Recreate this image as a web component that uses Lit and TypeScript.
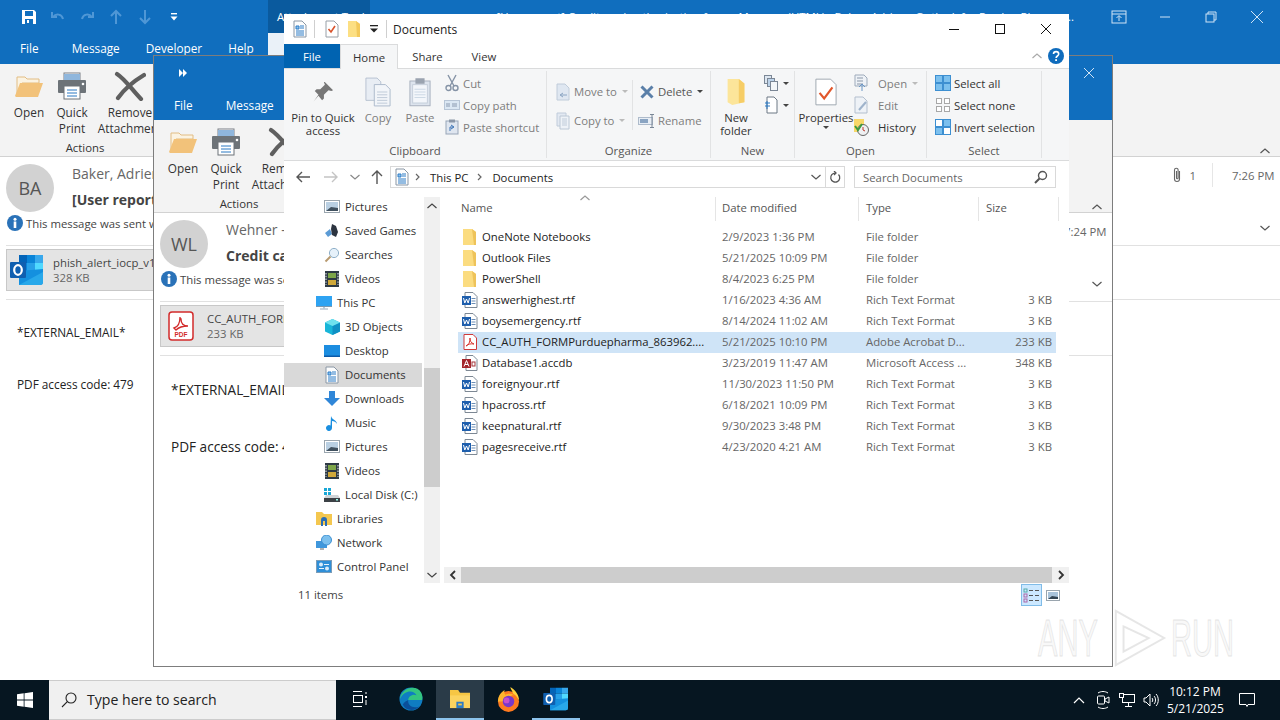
import { LitElement, html, css, TemplateResult } from "lit";
import { customElement } from "lit/decorators.js";

const icons = {
  save: html`<svg class="ic" width="16" height="16" viewBox="0 0 16 16"><path d="M1 1h12l2 2v12H1z" fill="#fff"/><rect x="4" y="2" width="8" height="5" fill="#106ebe"/><rect x="4" y="10" width="8" height="5" fill="#106ebe"/><rect x="6" y="11" width="2" height="3" fill="#fff"/></svg>`,
  undo: html`<svg class="ic" width="16" height="16" viewBox="0 0 16 16" fill="none" stroke="#4f97d6" stroke-width="2"><path d="M2 3v5h5"/><path d="M3 8c3-4 9-3 10 2"/></svg>`,
  redo: html`<svg class="ic" width="16" height="16" viewBox="0 0 16 16" fill="none" stroke="#4f97d6" stroke-width="2"><path d="M14 3v5H9"/><path d="M13 8C10 4 4 5 3 10"/></svg>`,
  upd: html`<svg class="ic" width="14" height="16" viewBox="0 0 14 16" fill="none" stroke="#4f97d6" stroke-width="2"><path d="M7 15V3M2 7l5-5 5 5"/></svg>`,
  dnd: html`<svg class="ic" width="14" height="16" viewBox="0 0 14 16" fill="none" stroke="#4f97d6" stroke-width="2"><path d="M7 1v12M2 9l5 5 5-5"/></svg>`,
  qatmore: html`<svg class="ic" width="10" height="10" viewBox="0 0 10 10" fill="#fff"><rect x="2" y="1" width="6" height="1.4"/><path d="M1.5 4.5h7L5 8.5z"/></svg>`,
  ff: html`<svg class="ic" width="10" height="10" viewBox="0 0 10 10" fill="#fff"><path d="M1 1l4 4-4 4zM5 1l4 4-4 4z"/></svg>`,
  openf: html`<svg class="ic" width="30" height="26" viewBox="0 0 30 26"><path d="M3 24V4h8l2 2h12v4H8z" fill="#fbf3e2" stroke="#e2bd83"/><path d="M1 23l5-13h23l-5 14H2z" fill="#f2c27a"/></svg>`,
  printer: html`<svg class="ic" width="30" height="28" viewBox="0 0 30 28"><rect x="7" y="1" width="16" height="10" fill="#fff" stroke="#7a7f85"/><rect x="7" y="2" width="16" height="6" fill="#8fb6dc"/><path d="M2 8h26a1 1 0 0 1 1 1v11a1 1 0 0 1-1 1H2a1 1 0 0 1-1-1V9a1 1 0 0 1 1-1z" fill="#6d7378"/><rect x="7" y="14" width="16" height="13" fill="#fff" stroke="#6d7378"/><path d="M10 18h10M10 21h10M10 24h10" stroke="#2b78c2"/><circle cx="26" cy="12" r="1.3" fill="#fff"/></svg>`,
  remove: html`<svg class="ic" width="32" height="30" viewBox="0 0 32 30" fill="none" stroke="#5f5f5f" stroke-width="4.200" stroke-linecap="round"><path d="M3 3c8 5 16 17 24 25"/><path d="M30 4C20 10 11 17 4 27"/></svg>`,
  doc: html`<svg class="ic" width="14" height="18" viewBox="0 0 14 18"><path d="M1 1h8l4 4v12H1z" fill="#fdfdfd" stroke="#8a97a5"/><path d="M3 6h3v3H3zM7 6h4M7 8h4M3 11h8M3 13h8M3 15h8" stroke="#2c7cc7" fill="#8cc0ea"/></svg>`,
  prop: html`<svg class="ic" width="14" height="18" viewBox="0 0 14 18"><path d="M1 1h8l4 4v12H1z" fill="#fff" stroke="#98a0a8"/><path d="M3.5 9l2.5 3 4-6" fill="none" stroke="#d9532c" stroke-width="1.6"/></svg>`,
  yfolder: html`<svg class="ic" width="14" height="18" viewBox="0 0 14 18"><path d="M1 1h8l4 3v13H1z" fill="#fcdf83"/><path d="M9 1l4 3v13H10z" fill="#f3c95b"/></svg>`,
  pin: html`<svg class="ic" width="22" height="22" viewBox="0 0 24 24" fill="#777"><path d="M14 1l9 9-2 1-3-1-5 5 0 4-2 2-4-5-5 6 5-7-4-4 2-2 4 0 5-5-1-3z"/></svg>`,
  copy: html`<svg class="ic" width="26" height="30" viewBox="0 0 28 32"><path d="M1 1h12l4 4v20H1z" fill="#e8edf4" stroke="#b4c0cf"/><path d="M10 8h12l5 5v18H10z" fill="#f2f5f9" stroke="#aab8ca"/><path d="M13 16h11M13 19h11M13 22h11M13 25h11M13 28h11" stroke="#bcc8d6"/></svg>`,
  paste: html`<svg class="ic" width="22" height="30" viewBox="0 0 24 32"><rect x="1" y="4" width="22" height="27" fill="#dde4ee" stroke="#a5aebc"/><rect x="4" y="8" width="16" height="20" fill="#f3f6fb" stroke="#c3ccd8"/><rect x="7" y="1" width="10" height="6" fill="#9aa3b0"/><path d="M6 13h12M6 16h12M6 19h12M6 22h12" stroke="#c9d5e2"/></svg>`,
  cut: html`<svg class="ic" width="14" height="18" viewBox="0 0 14 18" fill="none" stroke="#8593a6" stroke-width="1.4"><path d="M3 1l6 11M11 1L5 12"/><circle cx="3.5" cy="14" r="2.5"/><circle cx="10.5" cy="14" r="2.5"/></svg>`,
  cpath: html`<svg class="ic" width="16" height="12" viewBox="0 0 16 12"><rect x=".5" y="1.5" width="15" height="9" fill="#dbe7f3" stroke="#b7c5d6"/><path d="M3 4v4M5 4v4M8 5h5M8 7h5" stroke="#8b9ab0"/></svg>`,
  pshort: html`<svg class="ic" width="14" height="16" viewBox="0 0 14 16"><rect x="1" y="2" width="12" height="13" fill="#dfe6f0" stroke="#98a5b8"/><rect x="4" y="0.5" width="6" height="3" fill="#8b97a8"/><path d="M5 12V8h3M6 6l3 2-3 2" stroke="#3a73b5" fill="none"/></svg>`,
  moveto: html`<svg class="ic" width="14" height="18" viewBox="0 0 14 18"><path d="M1 1h8l4 4v12H1z" fill="#dfe7f1" stroke="#c0ccda"/><path d="M11 12H5M7 10l-3 2 3 2" stroke="#8aa4c2" fill="none"/></svg>`,
  copyto: html`<svg class="ic" width="14" height="18" viewBox="0 0 14 18"><path d="M1 1h9v13H1z" fill="#e3e9f2" stroke="#c0ccda"/><path d="M4 4h9v13H4z" fill="#eef2f7" stroke="#bcc8d6"/><path d="M6 7h5M6 9h5M6 11h5M6 13h5" stroke="#c0ccda"/></svg>`,
  del: html`<svg class="ic" width="14" height="14" viewBox="0 0 14 14" fill="none" stroke="#5a7fa8" stroke-width="3"><path d="M1.5 1.5l11 11M12.5 1.5l-11 11"/></svg>`,
  rename: html`<svg class="ic" width="18" height="14" viewBox="0 0 18 14"><rect x="0.5" y="3.5" width="14" height="7" fill="#e8eef5" stroke="#aebbcb"/><rect x="2" y="5" width="8" height="4" fill="#8aa4c2"/><path d="M12 .5h4M14 .5v13M12 13.5h4" stroke="#7a8797" fill="none"/></svg>`,
  nfolder: html`<svg class="ic" width="20" height="28" viewBox="0 0 20 30"><path d="M1 1h12l6 5v20l-13 3-5-3z" fill="#fce59a"/><path d="M13 1l6 5v20l-6 1z" fill="#f6cd66"/></svg>`,
  nitem: html`<svg class="ic" width="14" height="16" viewBox="0 0 14 16"><rect x=".5" y=".5" width="7" height="8" fill="#dde6f0" stroke="#7b8796"/><rect x="3.5" y="3.5" width="7" height="8" fill="#bcd3ea" stroke="#7b8796"/><rect x="6.5" y="6.5" width="7" height="9" fill="#f3f6f9" stroke="#7b8796"/></svg>`,
  eaccess: html`<svg class="ic" width="14" height="18" viewBox="0 0 14 18"><path d="M3 1h7l3 3v13H3z" fill="#fff" stroke="#6c7885"/><path d="M1 7h5M3 5v8M1 10h5" stroke="#2b78c2" fill="none"/></svg>`,
  props: html`<svg class="ic" width="22" height="30" viewBox="0 0 24 30"><path d="M1 1h16l6 6v22H1z" fill="#fff" stroke="#9aa3ad"/><path d="M5 16l5 6 9-12" fill="none" stroke="#e2572b" stroke-width="2.4"/></svg>`,
  open2: html`<svg class="ic" width="14" height="18" viewBox="0 0 14 18"><path d="M1 1h9l3 3v8H1z" fill="#eef2f7" stroke="#9eabbb"/><path d="M3 4h6M3 7h6M3 10h6" stroke="#8a97a8"/><path d="M8 17v-6M5 13l3-3 3 3" stroke="#6a96c5" fill="none"/></svg>`,
  edit: html`<svg class="ic" width="14" height="18" viewBox="0 0 14 18"><path d="M1 1h8l4 4v12H1z" fill="#eef2f7" stroke="#b3bfce"/><path d="M5 14l7-8" stroke="#9fb3cb" stroke-width="2"/></svg>`,
  history: html`<svg class="ic" width="16" height="18" viewBox="0 0 16 18"><rect x="1" y="1" width="10" height="13" fill="#f7d768"/><circle cx="10" cy="12" r="5.5" fill="#eef0f2" stroke="#666"/><path d="M10 9v3l2 1" stroke="#c0392b" fill="none"/><path d="M2 8l3 4 4-6" stroke="#3d9a3d" stroke-width="2" fill="none"/></svg>`,
  selall: html`<svg class="ic" width="16" height="16" viewBox="0 0 16 16" fill="#7cc0ee" stroke="#3d8fd1"><rect x=".5" y=".5" width="7" height="7"/><rect x="8.5" y=".5" width="7" height="7"/><rect x=".5" y="8.5" width="7" height="7"/><rect x="8.5" y="8.5" width="7" height="7"/></svg>`,
  selnone: html`<svg class="ic" width="16" height="16" viewBox="0 0 16 16" fill="#fff" stroke="#a8a8a8"><rect x="1.5" y="1.5" width="5" height="5"/><rect x="9.5" y="1.5" width="5" height="5"/><rect x="1.5" y="9.5" width="5" height="5"/><rect x="9.5" y="9.5" width="5" height="5"/></svg>`,
  selinv: html`<svg class="ic" width="16" height="16" viewBox="0 0 16 16" stroke="#3d8fd1"><rect x=".5" y=".5" width="7" height="7" fill="#fff"/><rect x="8.5" y=".5" width="7" height="7" fill="#7cc0ee"/><rect x=".5" y="8.5" width="7" height="7" fill="#7cc0ee"/><rect x="8.5" y="8.5" width="7" height="7" fill="#fff"/></svg>`,
  help: html`<svg class="ic" width="16" height="16" viewBox="0 0 16 16"><circle cx="8" cy="8" r="8" fill="#0f6cbd"/><path d="M5.5 6c0-3.2 5.2-3.2 5.2 0 0 2-2.6 2-2.6 4" fill="none" stroke="#fff" stroke-width="1.6"/><rect x="7.2" y="11.2" width="1.8" height="1.8" fill="#fff"/></svg>`,
  magnif: html`<svg class="ic" width="14" height="14" viewBox="0 0 14 14" fill="none" stroke="#555" stroke-width="1.4"><circle cx="8.5" cy="5.5" r="4"/><path d="M5.5 8.5L1 13" stroke-width="2"/></svg>`,
  refresh: html`<svg class="ic" width="12" height="13" viewBox="0 0 12 13" fill="none" stroke="#555" stroke-width="1.3"><path d="M9.5 3.5a4.5 4.5 0 1 1-3-1.4"/><path d="M5 0l2 2-2 2" /></svg>`,
  back: html`<svg class="ic" width="14" height="12" viewBox="0 0 14 12" fill="none" stroke="#555" stroke-width="1.4"><path d="M14 6H1M6 1L1 6l5 5"/></svg>`,
  fwd: html`<svg class="ic" width="14" height="12" viewBox="0 0 14 12" fill="none" stroke="#c4c4c4" stroke-width="1.4"><path d="M0 6h13M8 1l5 5-5 5"/></svg>`,
  up: html`<svg class="ic" width="12" height="14" viewBox="0 0 12 14" fill="none" stroke="#555" stroke-width="1.4"><path d="M6 14V1M1 6l5-5 5 5"/></svg>`,
  pics: html`<svg class="ic" width="16" height="13" viewBox="0 0 16 13"><rect x=".5" y=".5" width="15" height="12" fill="#fff" stroke="#9aa5ae"/><rect x="2" y="2" width="12" height="9" fill="#b9cfe2"/><path d="M2 11l5-4 7 1v3z" fill="#40505e"/></svg>`,
  games: html`<svg class="ic" width="16" height="16" viewBox="0 0 16 16"><path d="M1 10l5-4 2 5-4 3z" fill="#5b9bd5"/><path d="M8 1l4 2 2 6-2 5-4-2-1-6z" fill="#2c3440"/></svg>`,
  searches: html`<svg class="ic" width="16" height="16" viewBox="0 0 16 16"><circle cx="10" cy="6" r="4.6" fill="#e6f1fa" stroke="#8fb0c9"/><path d="M6.5 9.5L1.5 14.5" stroke="#b89a70" stroke-width="2"/></svg>`,
  videos: html`<svg class="ic" width="14" height="16" viewBox="0 0 14 16"><rect width="14" height="16" fill="#2e3a44"/><rect x="3" y="2" width="8" height="5" fill="#7ea64a"/><rect x="3" y="9" width="8" height="5" fill="#cfa83a"/><path d="M1 2v12M13 2v12" stroke="#cfd6dc" stroke-dasharray="1.4 1.4" stroke-width="1.2"/></svg>`,
  pc: html`<svg class="ic" width="16" height="14" viewBox="0 0 16 14"><rect width="16" height="10" fill="#2ea3f2"/><rect y="10" width="16" height="1" fill="#7d98ae"/><path d="M4 13h8" stroke="#9ab"/><path d="M7 11h2v2H7z" fill="#b9cbd9"/></svg>`,
  obj3d: html`<svg class="ic" width="15" height="16" viewBox="0 0 15 16"><path d="M7.5 0L15 3.5v9L7.5 16 0 12.500v-9z" fill="#18b5d8"/><path d="M7.500 7L15 3.500v9L7.500 16z" fill="#0f90c4"/><path d="M7.500 0L15 3.500 7.500 7 0 3.500z" fill="#6ee2ee"/></svg>`,
  desktop: html`<svg class="ic" width="16" height="12" viewBox="0 0 16 12"><rect width="16" height="12" fill="#1c8de0"/><rect y="10.500" width="16" height="1.500" fill="#0c5aa8"/></svg>`,
  dl: html`<svg class="ic" width="16" height="16" viewBox="0 0 16 16" fill="#2f86d8"><path d="M5 0h6v7h5l-8 8-8-8h5z"/></svg>`,
  music: html`<svg class="ic" width="12" height="16" viewBox="0 0 12 16"><path d="M5 1c1 4 6 4 6 8-1-2-3-3-5-3v7a3 3 0 1 1-1.500-2.600z" fill="#1a8fe0"/></svg>`,
  disk: html`<svg class="ic" width="16" height="14" viewBox="0 0 16 14"><path d="M2 7h12l2 3v4H0v-4z" fill="#cfd4d8"/><rect y="10" width="16" height="4" fill="#3c4146"/><rect x="12" y="11" width="2" height="1.500" fill="#9fe"/><rect x="0" y="0" width="3" height="3" fill="#19a7d6"/><rect x="4" y="0" width="3" height="3" fill="#19a7d6"/><rect x="0" y="4" width="3" height="3" fill="#19a7d6"/><rect x="4" y="4" width="3" height="3" fill="#19a7d6"/></svg>`,
  libs: html`<svg class="ic" width="16" height="15" viewBox="0 0 16 15"><path d="M0 1h6l2 2h8v11H0z" fill="#f4c74f"/><path d="M5 15V9a3 3 0 0 1 6 0v6H9v-5H7v5z" fill="#2a6db5"/></svg>`,
  network: html`<svg class="ic" width="16" height="15" viewBox="0 0 16 15"><rect y="6" width="11" height="7" fill="#3f97dc"/><circle cx="10.500" cy="5" r="5" fill="#7cc0ee" stroke="#3d8fd1"/><path d="M4 14h4" stroke="#666"/></svg>`,
  cpanel: html`<svg class="ic" width="16" height="13" viewBox="0 0 16 13"><rect x=".5" y=".5" width="15" height="12" fill="#2f8fd8" stroke="#7a9cb8"/><circle cx="5" cy="4.500" r="2" fill="#d9ecfa"/><circle cx="11" cy="8.500" r="2" fill="#d9ecfa"/><path d="M8 4.500h5M3 8.500h5" stroke="#e9f4fc"/></svg>`,
  rowfolder: html`<svg class="ic" width="14" height="16" viewBox="0 0 14 16"><path d="M0 0h9l4 3v13H0z" fill="#fbdc80"/><path d="M9 0l4 3v13h-2z" fill="#eec35a"/></svg>`,
  word: html`<svg class="ic" width="16" height="16" viewBox="0 0 16 16"><path d="M3 .5h8l4 4v11H3z" fill="#fff" stroke="#7d8894"/><path d="M9.500 6.500h4M9.500 9h4M9.500 11.500h4" stroke="#6b8db5"/><rect y="4" width="9" height="9" fill="#1f5fad"/><path d="M1.500 6l1.300 5 1.700-4 1.700 4 1.300-5" stroke="#fff" fill="none"/></svg>`,
  pdfrow: html`<svg class="ic" width="14" height="16" viewBox="0 0 14 16"><path d="M1 .500h9l3.500 3.500v11.500H1z" fill="#fff" stroke="#cf3b3b"/><path d="M3 12c3-1 4-4 4-8 0 3 1 5 4 6-3-.5-6 0-8 2z" fill="none" stroke="#d8342e"/></svg>`,
  access: html`<svg class="ic" width="16" height="16" viewBox="0 0 16 16"><path d="M4 .500h7l4 4v11H4z" fill="#fff" stroke="#7d8894"/><rect x="10" y="7" width="3" height="4" fill="none" stroke="#a4373a"/><rect y="4" width="9" height="9" fill="#a4262c"/><path d="M2 11.500L4.500 5.500 7 11.500M3 9.500h3" stroke="#fff" fill="none"/></svg>`,
  info: html`<svg class="ic" width="16" height="16" viewBox="0 0 16 16"><circle cx="8" cy="8" r="8" fill="#2a72b8"/><circle cx="8" cy="4.200" r="1.500" fill="#fff"/><rect x="6.700" y="6.500" width="2.600" height="6.500" fill="#fff"/></svg>`,
  outlook: html`<svg class="ic" width="34" height="32" viewBox="0 0 34 32"><rect x="9" y="1" width="8" height="8" fill="#0364b8"/><rect x="17" y="1" width="8" height="8" fill="#0a84d8"/><rect x="25" y="1" width="8" height="8" fill="#38a8ec"/><rect x="9" y="9" width="8" height="8" fill="#0a84d8"/><rect x="17" y="9" width="8" height="8" fill="#28a0e8"/><rect x="25" y="9" width="8" height="8" fill="#50d9ff"/><path d="M9 17l24-2v13a3 3 0 0 1-3 3H9z" fill="#1490df"/><path d="M9 31l24-13v10a3 3 0 0 1-3 3z" fill="#28a8ea"/><rect y="8" width="16" height="16" rx="1" fill="#0f5fb0"/><ellipse cx="8" cy="16" rx="3.800" ry="4.800" fill="none" stroke="#fff" stroke-width="2.200"/></svg>`,
  pdfbig: html`<svg class="ic" width="26" height="30" viewBox="0 0 26 30"><rect x="1" y="1" width="24" height="28" rx="3" fill="#fff" stroke="#d22b2b" stroke-width="1.500"/><path d="M6 17c4-1 6-5 6-11 0 2 1 2 1 2 0 4 2 7 7 7-4 0-9 1-12 4z" fill="none" stroke="#d22b2b" stroke-width="1.300"/><text x="13" y="26" text-anchor="middle" font-size="6.500" font-weight="700" fill="#d22b2b" font-family="Liberation Sans">PDF</text></svg>`,
  clip: html`<svg class="ic" width="10" height="16" viewBox="0 0 10 16" fill="none" stroke="#666" stroke-width="1.100"><path d="M7.500 4v8a2.500 2.500 0 0 1-5 0V3a1.800 1.800 0 0 1 3.600 0v8a.8.8 0 0 1-1.600 0V4"/></svg>`,
  winlogo: html`<svg class="ic" width="16" height="16" viewBox="0 0 16 16" fill="#fff"><path d="M0 2.300l6.700-1v6.300H0zM7.500 1.200L16 0v7.600H7.500zM0 8.400h6.700v6.300L0 13.700zM7.500 8.400H16V16l-8.500-1.200z"/></svg>`,
  tbsearch: html`<svg class="ic" width="16" height="16" viewBox="0 0 16 16" fill="none" stroke="#222" stroke-width="1.100"><circle cx="10" cy="6" r="5"/><path d="M6.300 9.700L1 15"/></svg>`,
  taskview: html`<svg class="ic" width="16" height="16" viewBox="0 0 16 16" fill="none" stroke="#fff"><path d="M1 .500h9M1 15.500h9"/><rect x="1.500" y="4.500" width="9" height="7"/><rect x="13" y="5" width="2" height="2" fill="#fff" stroke="none"/><path d="M14 1v2M14 9v5"/></svg>`,
  edge: html`<svg class="ic" width="24" height="24" viewBox="0 0 26 26"><circle cx="13" cy="13" r="12.500" fill="#0f7dc2"/><path d="M1 13C2 4 12-2 20 2c5 3 6 8 5 12H10c0-4 5-7 9-5-3-6-13-6-18 4z" fill="#33c481"/><path d="M10 14c-1 6 5 10 12 7-4 5-14 6-18-2 2-3 4-4 6-5z" fill="#0a4f9a"/></svg>`,
  exptb: html`<svg class="ic" width="22" height="20" viewBox="0 0 24 22"><path d="M1 1h9l2 3h11v17H1z" fill="#f6c644"/><rect x="1" y="7" width="22" height="14" fill="#fbd35f"/><path d="M8 14h8v7H8z" fill="#2c7cc7"/><rect x="10" y="16" width="4" height="2" fill="#f6c644"/></svg>`,
  firefox: html`<svg class="ic" width="23" height="25" viewBox="0 0 24 26"><circle cx="12" cy="15" r="11" fill="#ff7a1f"/><path d="M1 15C1 8 5 5 8 3c-1 3 0 4 1 5 2-1 7-2 9 1-2-1-3 0-3 0l-6 6z" fill="#ffb52e"/><path d="M14 0c5 3 9 8 9 14-2-4-4-6-6-7-1-3-3-5-3-7z" fill="#ffd23d"/><circle cx="12" cy="15" r="6" fill="#7a38c9"/><circle cx="10" cy="14" r="3" fill="#c84fcb"/></svg>`,
  tbchev: html`<svg class="ic" width="12" height="8" viewBox="0 0 12 8" fill="none" stroke="#fff" stroke-width="1.200"><path d="M1 7l5-5 5 5"/></svg>`,
  cam: html`<svg class="ic" width="14" height="20" viewBox="0 0 14 20" fill="none" stroke="#fff"><rect x="1.500" y="6" width="7" height="8" rx="1"/><path d="M9 9l4-2v6l-4-2zM2 3c3-2 7-2 10 0M2 17c3 2 7 2 10 0"/></svg>`,
  net: html`<svg class="ic" width="16" height="14" viewBox="0 0 16 14" fill="none" stroke="#fff"><rect x="3.500" y="1.500" width="12" height="8"/><path d="M9.500 10v3M6 13.500h7"/><rect x=".5" y=".5" width="4" height="4" fill="#0b1826"/></svg>`,
  vol: html`<svg class="ic" width="16" height="14" viewBox="0 0 16 14" fill="none" stroke="#fff"><path d="M1 5h2l4-4v12l-4-4H1zM9 5c1 1 1 3 0 4M11 3c2 2 2 6 0 8M13 1c3 3 3 9 0 12"/></svg>`,
  notif: html`<svg class="ic" width="16" height="16" viewBox="0 0 16 16" fill="none" stroke="#fff"><path d="M.5 1.500h15v11H9l-1 2-1-2H.5z"/></svg>`,
  details: html`<svg class="ic" width="17" height="15" viewBox="0 0 17 15" fill="none" stroke="#555"><rect x="1" y="1" width="3" height="3" stroke="#5aa"/><rect x="1" y="6" width="3" height="3" stroke="#a6a"/><rect x="1" y="11" width="3" height="3" stroke="#a6a"/><path d="M6 2.500h4M12 2.500h4M6 7.500h4M12 7.500h4M6 12.500h4M12 12.500h4"/></svg>`,
  large: html`<svg class="ic" width="14" height="11" viewBox="0 0 14 11"><rect x=".5" y=".5" width="13" height="10" fill="#fff" stroke="#9aa5ae"/><rect x="2" y="2" width="10" height="7" fill="#a9c3da"/><path d="M2 9l4-3 6 1v2z" fill="#344553"/></svg>`,
};

type IconName = keyof typeof icons;

const chev = (d: "up" | "down" | "left" | "right" | "small", color = "#555") => {
  const paths: Record<string, string> = {
    up: "M0.500 7l4.500-4 4.500 4",
    down: "M0.500 3l4.500 4 4.500-4",
    left: "M7 1L3 5l4 4",
    right: "M3 1l4 4-4 4",
    small: "M3 2l3 3-3 3",
  };
  const w = d === "left" || d === "right" ? 1.8 : 1.2;
  return html`<svg class="ic" width="10" height="10" viewBox="0 0 10 10" fill="none" stroke=${color} stroke-width=${w}><path d=${paths[d]}/></svg>`;
};

const navRows: [string, IconName, boolean, boolean?][] = [
  ["Pictures", "pics", true],
  ["Saved Games", "games", true],
  ["Searches", "searches", true],
  ["Videos", "videos", true],
  ["This PC", "pc", false],
  ["3D Objects", "obj3d", true],
  ["Desktop", "desktop", true],
  ["Documents", "doc", true, true],
  ["Downloads", "dl", true],
  ["Music", "music", true],
  ["Pictures", "pics", true],
  ["Videos", "videos", true],
  ["Local Disk (C:)", "disk", true],
  ["Libraries", "libs", false],
  ["Network", "network", false],
  ["Control Panel", "cpanel", false],
];

const files: [string, IconName, string, string, string, boolean?][] = [
  ["OneNote Notebooks", "rowfolder", "2/9/2023 1:36 PM", "File folder", ""],
  ["Outlook Files", "rowfolder", "5/21/2025 10:09 PM", "File folder", ""],
  ["PowerShell", "rowfolder", "8/4/2023 6:25 PM", "File folder", ""],
  ["answerhighest.rtf", "word", "1/16/2023 4:36 AM", "Rich Text Format", "3 KB"],
  ["boysemergency.rtf", "word", "8/14/2024 11:02 AM", "Rich Text Format", "3 KB"],
  ["CC_AUTH_FORMPurduepharma_863962....", "pdfrow", "5/21/2025 10:10 PM", "Adobe Acrobat D...", "233 KB", true],
  ["Database1.accdb", "access", "3/23/2019 11:47 AM", "Microsoft Access ...", "348 KB"],
  ["foreignyour.rtf", "word", "11/30/2023 11:50 PM", "Rich Text Format", "3 KB"],
  ["hpacross.rtf", "word", "6/18/2021 10:09 PM", "Rich Text Format", "3 KB"],
  ["keepnatural.rtf", "word", "9/30/2023 3:48 PM", "Rich Text Format", "3 KB"],
  ["pagesreceive.rtf", "word", "4/23/2020 4:21 AM", "Rich Text Format", "3 KB"],
];

@customElement("app-root")
export class AppRoot extends LitElement {
  static styles = css`
    :host {
      display: flex;
      flex-direction: column;
      width: 1280px;
      height: 720px;
      overflow: hidden;
      background: #fff;
      font-family: "Open Sans", "Noto Sans", sans-serif;
      font-size: 11.35px;
      color: #333;
    }
    .ic { display: block; flex: none; }
    .desk { position: relative; height: 680px; overflow: hidden; background: #fff; }

    /* Outlook windows */
    .mail { position: absolute; display: flex; flex-direction: column; background: #fff; overflow: hidden; }
    .mail.back { left: 0; top: 0; width: 1280px; height: 680px; }
    .mail.front { left: 153px; top: 55px; width: 958px; height: 610px; border: 1px solid #7d7d7d; }
    .head { background: #106ebe; height: 64px; color: #fff; flex: none; }
    .titlebar { display: flex; align-items: flex-start; height: 33px; }
    .qat { display: flex; align-items: center; height: 33px; padding-left: 14.5px; }
    .qat span { width: 29px; display: flex; justify-content: center; }
    .qatspace { width: 268px; flex: none; display: flex; }
    .ctxtab { width: 102px; height: 33px; background: #0a5a9e; line-height: 33px; padding-left: 9px; box-sizing: border-box; white-space: nowrap; overflow: hidden; flex: none; }
    .wintitle { flex: 1; text-align: right; line-height: 33px; white-space: nowrap; overflow: hidden; padding-right: 22px; }
    .wctl { display: flex; align-items: center; height: 33px; flex: none; }
    .wctl span { width: 46px; display: flex; justify-content: center; }
    .wctl svg { stroke: #cfe3f5; fill: none; }
    .mtabs { display: flex; gap: 26px; padding: 6px 0 0 20px; font-size: 11.8px; line-height: 18px; position: relative; }
    .mtabs .first { margin-right: 7px; }
    .activetab { position: absolute; left: 268px; top: 0; width: 60px; height: 22px; background: #eaf1f8; }
    .front .mtabs { padding-top: 7px; }
    .rib { height: 92px; background: #f3f3f3; flex: none; display: flex; border-bottom: 1px solid #d2d2d2; }
    .rgroup { display: flex; flex-direction: column; width: 162px; margin-left: 6px; padding-top: 4px; box-sizing: border-box; height: 92px; }
    .rbtns { display: flex; height: 72px; text-align: center; line-height: 16px; color: #333; font-size: 11.8px; }
    .rbtn { display: flex; flex-direction: column; align-items: center; white-space: nowrap; }
    .rbtn.a { width: 46px; }
    .rbtn.b { width: 40px; }
    .rbtn.c { width: 76px; }
    .rico { height: 36px; display: flex; align-items: center; justify-content: center; }
    .rlab { text-align: center; line-height: 16px; padding-right: 4px; }
    .collapse { margin-left: auto; align-self: flex-end; padding: 0 10px 0 0; }
    .meta { display: flex; height: 56px; padding: 7px 0 0 6px; box-sizing: border-box; flex: none; }
    .avatar { width: 48px; height: 48px; border-radius: 50%; background: #d2d2d2; color: #555; font-size: 18px; display: flex; align-items: center; justify-content: center; flex: none; }
    .who { margin-left: 18px; flex: 1; white-space: nowrap; }
    .from { font-size: 14px; line-height: 20px; color: #666; }
    .subj { font-size: 14px; line-height: 22px; margin-top: 5px; font-weight: 700; color: #444; }
    .side { display: flex; align-items: center; height: 22px; color: #666; }
    .side .c1 { margin: 0 16px 0 8px; }
    .side .vsep { width: 1px; height: 24px; background: #e6e6e6; margin-right: 19px; }
    .side .time { padding-right: 8px; width: 40px; white-space: nowrap; }
    .info { display: flex; align-items: center; gap: 3px; height: 20px; padding-left: 7px; white-space: nowrap; flex: none; color: #444; }
    .expand { margin: 10px 0 0 auto; padding-right: 10px; }
    .hr { height: 1px; background: #e1e1e1; flex: none; margin: 0 0 0 6px; }
    .hr.h1 { margin-top: 12px; }
    .attach { margin: 3px 0 8px 6px; width: 320px; height: 42px; background: #e4e4e4; border: 1px solid #c8c8c8; box-sizing: border-box; display: flex; align-items: center; flex: none; white-space: nowrap; }
    .aicon { width: 40px; margin-right: 6px; display: flex; justify-content: center; }
    .att-name { line-height: 15px; color: #444; }
    .att-size { line-height: 15px; color: #666; }
    .body { padding: 23px 0 0 17px; line-height: 18px; color: #222; white-space: nowrap; font-size: 11.8px; }
    .body p { margin: 0 0 34px; }
    .front .body { font-size: 13.6px; line-height: 20px; padding-top: 24px; }
    .front .body p { margin-bottom: 37px; }

    /* Explorer */
    .exp { position: absolute; left: 284px; top: 14px; width: 785px; height: 592px; background: #fff; display: flex; flex-direction: column; overflow: hidden; }
    .xtitle { display: flex; align-items: center; height: 30px; flex: none; font-size: 12px; color: #222; }
    .xq { display: flex; align-items: center; padding-left: 9px; }
    .xq .sep { width: 1px; height: 18px; background: #cfcfcf; margin: 0 10px 0 7px; }
    .xq .g { margin-right: 8px; }
    .xq .sep2 { width: 1px; height: 18px; background: #cfcfcf; margin: 0 6px 0 7px; }
    .xctl { margin-left: auto; display: flex; align-items: center; }
    .xctl span { width: 46px; display: flex; justify-content: center; }
    .xtabs { display: flex; height: 25px; flex: none; border-bottom: 1px solid #dadbdc; box-sizing: border-box; align-items: stretch; }
    .xt { display: flex; align-items: center; justify-content: center; }
    .xt.file { width: 56px; background: #0063b1; color: #fff; }
    .xt.home { width: 58px; background: #f5f6f7; border: 1px solid #dadbdc; border-bottom: 0; box-sizing: border-box; height: 25px; }
    .xt.share { width: 59px; }
    .xt.view { width: 54px; }
    .xtr { margin-left: auto; display: flex; align-items: center; padding-right: 5px; gap: 6px; }
    .xrib { display: flex; height: 92px; background: #f5f6f7; border-bottom: 1px solid #dadbdc; box-sizing: border-box; flex: none; color: #333; }
    .grp { display: flex; flex-direction: column; border-right: 1px solid #e2e3e4; margin: 2px 0; box-sizing: border-box; height: 87px; }
    .grp.cb { width: 263px; }
    .grp.org { width: 164px; }
    .grp.nw { width: 84px; }
    .grp.op { width: 132px; }
    .grp.sl { width: 115px; }
    .gbody { height: 72px; display: flex; flex: none; padding-top: 3px; box-sizing: border-box; }
    .gbody > .col { margin-top: -2px; }
    .glab { flex: 1; text-align: center; line-height: 16px; color: #555; }
    .big { display: flex; flex-direction: column; align-items: center; text-align: center; line-height: 13px; white-space: nowrap; flex: none; }
    .big .bi { height: 36px; display: flex; align-items: center; justify-content: center; margin-bottom: 1px; }
    .dim { color: #7d7d7d; }
    .col { display: flex; flex-direction: column; flex: none; }
    .sm { display: flex; align-items: center; height: 22px; white-space: nowrap; }
    .sm .si { display: flex; justify-content: center; flex: none; width: 16px; margin-right: 3px; }
    .sm.soft { color: #555; }
    .org .col { padding-top: 5px; }
    .org .sm { height: 29px; }
    .org .col-m { margin-left: 8px; width: 77px; }
    .orgsep { width: 1px; height: 50px; margin: 6px 6px 0 0; background: #e2e3e4; }
    .caret { display: inline-block; width: 0; height: 0; border: 3px solid transparent; border-top: 3.500px solid #444; border-bottom: 0; margin-left: 5px; }
    .caret.d { border-top-color: #bbb; }
    .w-pin { width: 62px; margin-left: 8px; }
    .w-copy { width: 40px; margin-left: 4px; }
    .w-paste { width: 40px; margin-left: 2px; }
    .col-cb { margin-left: 4px; }
    .nfold { width: 50px; }
    .nsmall { margin-left: 3px; padding-top: 2px; gap: 4px; }
    .nsmall .sm { height: 18px; }
    .prop-b { width: 62px; }
    .col-op { margin-left: -5px; }
    .col-op .si { width: 18px; margin-right: 8px; }
    .col-sl { margin-left: 8px; }
    .big .under { display: block; margin: 2px auto 0; }

    .addr { display: flex; align-items: flex-start; height: 36px; padding: 5px 0 0 11px; box-sizing: border-box; flex: none; }
    .anav { display: flex; align-items: center; height: 22px; }
    .anav .b { width: 16px; display: flex; justify-content: center; }
    .anav .b2 { margin-left: 12px; }
    .anav .b3 { margin-left: 8px; }
    .anav .b4 { margin-left: 6px; }
    .abar { display: flex; align-items: center; width: 436px; height: 22px; border: 1px solid #d9d9d9; box-sizing: border-box; margin-left: 5px; padding-left: 4px; color: #222; }
    .abar .t1 { margin: 0 7px 0 4px; }
    .abar .t2 { margin: 0 7px; }
    .abar .r { margin-left: auto; margin-right: 4px; }
    .arefresh { width: 19px; height: 22px; border: 1px solid #d9d9d9; border-left: 0; box-sizing: border-box; display: flex; align-items: center; justify-content: center; }
    .asearch { width: 202px; height: 22px; margin-left: 9px; border: 1px solid #d9d9d9; box-sizing: border-box; display: flex; align-items: center; padding: 0 7px 0 8px; color: #666; justify-content: space-between; }

    .xmain { display: flex; height: 387px; flex: none; }
    .nav { width: 140px; overflow: hidden; flex: none; }
    .navin { margin-top: -2px; }
    .nrow { display: flex; align-items: center; height: 24px; white-space: nowrap; color: #333; margin-right: 2px; padding-bottom: 1px; box-sizing: border-box; }
    .nrow .ni { width: 16px; display: flex; justify-content: center; margin-right: 5px; flex: none; }
    .nrow.sub { padding-left: 40px; }
    .nrow.top { padding-left: 32px; }
    .nrow.sel { background: #d9d9d9; }
    .vs { width: 16px; margin-right: 4px; background: #f0f0f0; display: flex; flex-direction: column; height: 386px; flex: none; }
    .vs .arrow { height: 17px; display: flex; justify-content: center; align-items: center; flex: none; }
    .vs .gap1 { height: 154px; flex: none; }
    .vs .thumb { height: 119px; background: #cdcdcd; flex: none; }
    .vs .gap2 { flex: 1; }
    .fp { flex: 1; display: flex; flex-direction: column; min-width: 0; }
    .fh { display: grid; grid-template-columns: 258px 143px 120px 80px; margin-left: 14px; height: 24px; position: relative; flex: none; color: #555; }
    .fh div { padding-left: 6px; border-right: 1px solid #e5e5e5; line-height: 22px; box-sizing: border-box; }
    .fh div:first-child { padding-left: 3px; }
    .fh div:nth-child(n + 3) { padding-left: 7px; }
    .sortc { position: absolute; left: 122px; top: -4px; }
    .fl { margin: 6px 0 0 14px; width: 598px; flex: none; height: 320px; }
    .fr { display: grid; grid-template-columns: 258px 143px 120px 77px; height: 21px; align-items: center; white-space: nowrap; color: #666; padding-bottom: 2px; box-sizing: border-box; }
    .fr.sel { background: #cfe4f7; }
    .fr .n { display: flex; align-items: center; color: #222; }
    .fr .n .fi { width: 16px; margin-left: 4px; margin-right: 4px; display: flex; justify-content: center; }
    .fr .d { padding-left: 6px; }
    .fr .d2 { padding-left: 7px; }
    .fr .sz { text-align: right; padding-right: 4px; }
    .hs { margin-top: auto; height: 16px; display: flex; background: #f0f0f0; align-items: stretch; flex: none; margin-bottom: 1px; }
    .hs .arrow { width: 17px; display: flex; align-items: center; justify-content: center; flex: none; }
    .hs .thumb { flex: 1; background: #cdcdcd; }
    .xstat { display: flex; align-items: center; height: 22px; flex: none; padding-left: 14px; color: #444; }
    .stattext { margin-top: -2px; }
    .views { margin-left: auto; display: flex; align-items: center; margin-right: 9px; height: 22px; }
    .vbtn { width: 21px; height: 22px; background: #cce8ff; border: 1px solid #80bce8; box-sizing: border-box; display: flex; align-items: center; justify-content: center; margin-right: 4px; }

    .wm { position: absolute; left: 1038px; top: 606px; display: flex; align-items: center; pointer-events: none; font-family: "Liberation Sans", sans-serif; font-size: 52px; color: rgba(240, 240, 240, .45); -webkit-text-stroke: 1px rgba(205, 205, 205, .5); }
    .wm span { display: block; transform: scaleX(.56); transform-origin: left center; width: 72px; }
    .wm .r2 { margin-left: 3px; }

    /* Taskbar */
    .task { height: 40px; flex: none; background: #061621; display: flex; color: #fff; align-items: stretch; }
    .tstart { width: 49px; display: flex; align-items: center; justify-content: center; flex: none; }
    .tsearch { width: 287px; background: #f0f0f0; color: #222; display: flex; align-items: center; padding-left: 12px; box-sizing: border-box; font-size: 14.1px; gap: 10px; flex: none; border-top: 1px solid #ccc; border-bottom: 1px solid #ccc; white-space: nowrap; }
    .tsearch .q { margin-top: -2px; }
    .tapp { width: 48px; display: flex; align-items: center; justify-content: center; flex: none; box-sizing: border-box; border-bottom: 2px solid transparent; }
    .tapp.edge { margin: 0 1px 0 3px; }
    .tapp.active { background: #2a3b48; border-bottom-color: #8cc3ec; }
    .tapp.run { border-bottom-color: #8cc3ec; }
    .tapp.run svg { width: 26px; height: 24px; }
    .tray { margin-left: auto; display: flex; align-items: center; }
    .tray .ti { width: 24px; display: flex; justify-content: center; }
    .clock { width: 56px; text-align: center; font-size: 12px; line-height: 17px; margin-left: 4px; white-space: nowrap; }
    .notif { width: 44px; display: flex; justify-content: center; margin-left: 2px; margin-right: 11px; }
  `;

  private qat() {
    return html`<div class="qat">
      <span>${icons.save}</span><span>${icons.undo}</span><span>${icons.redo}</span><span>${icons.upd}</span><span>${icons.dnd}</span><span>${icons.qatmore}</span>
    </div>`;
  }

  private mail(o: { cls: string; initials: string; from: string; subj: string; file: string; size: string; icon: IconName; code: string; time: string; }) {
    const back = o.cls === "back";
    return html`<section class="mail ${o.cls}">
      <div class="head">
        <div class="titlebar">
          ${back
            ? html`<div class="qatspace">${this.qat()}</div>
                <div class="ctxtab">Attachment Tools</div>
                <div class="wintitle">[User report] Credit card authorization form - Message (HTML) - Baker, Adrien - Outlook for Purdue Pharma ...</div>
                <div class="wctl">
                  <span><svg class="ic" width="16" height="14" viewBox="0 0 16 14"><rect x="1" y="1" width="14" height="12"/><path d="M1 4h14M8 11V6M5.500 8L8 5.500 10.500 8"/></svg></span>
                  <span><svg class="ic" width="12" height="12" viewBox="0 0 12 12"><path d="M1 6h10"/></svg></span>
                  <span><svg class="ic" width="12" height="12" viewBox="0 0 12 12"><rect x="1" y="3" width="8" height="8"/><path d="M3 3V1h8v8H9"/></svg></span>
                  <span><svg class="ic" width="14" height="14" viewBox="0 0 14 14"><path d="M1 1l12 12M13 1L1 13"/></svg></span>
                </div>`
            : html`<div class="qat"><span>${icons.ff}</span></div>
                <div class="wintitle"></div>
                <div class="wctl"><span><svg class="ic" width="12" height="12" viewBox="0 0 12 12"><path d="M1 1l10 10M11 1L1 11"/></svg></span></div>`}
        </div>
        <div class="mtabs">
          <span class="first">File</span><span>Message</span><span>Developer</span><span>Help</span>
          ${back ? html`<span class="activetab"></span>` : ""}
        </div>
      </div>
      <div class="rib">
        <div class="rgroup">
          <div class="rbtns">
            <div class="rbtn a"><div class="rico">${icons.openf}</div>Open</div>
            <div class="rbtn b"><div class="rico">${icons.printer}</div>Quick<br />Print</div>
            <div class="rbtn c"><div class="rico">${icons.remove}</div>Remove<br />Attachment</div>
          </div>
          <div class="rlab">Actions</div>
        </div>
        <div class="collapse">${chev("up")}</div>
      </div>
      <div class="meta">
        <div class="avatar">${o.initials}</div>
        <div class="who"><div class="from">${o.from}</div><div class="subj">${o.subj}</div></div>
        <div class="side">${icons.clip}<span class="c1">1</span><span class="vsep"></span><span class="time">${o.time}</span></div>
      </div>
      <div class="info">${icons.info}<span>This message was sent with High importance.</span><span class="expand">${chev("down")}</span></div>
      <div class="hr h1"></div>
      <div class="attach">
        <div class="aicon">${icons[o.icon]}</div>
        <div><div class="att-name">${o.file}</div><div class="att-size">${o.size}</div></div>
      </div>
      <div class="hr"></div>
      <div class="body"><p>*EXTERNAL_EMAIL*</p><p>PDF access code: ${o.code}</p></div>
    </section>`;
  }

  private explorer() {
    const big = (cls: string, ic: IconName, t: TemplateResult | string, dim = false) =>
      html`<div class="big ${cls} ${dim ? "dim" : ""}"><div class="bi">${icons[ic]}</div><div>${t}</div></div>`;
    const sm = (ic: IconName, t: string, tone = "", car = "") =>
      html`<div class="sm ${tone}"><span class="si">${icons[ic]}</span>${t}${car ? html`<span class="caret ${car === "d" ? "d" : ""}"></span>` : ""}</div>`;
    return html`<section class="exp">
      <div class="xtitle">
        <div class="xq">
          ${icons.doc}<span class="sep"></span><span class="g">${icons.prop}</span><span class="g">${icons.yfolder}</span>
          <svg class="ic" width="10" height="10" viewBox="0 0 10 10" fill="#222"><rect x="1" y="1" width="8" height="1.300"/><path d="M1 4.500h8L5 8.500z"/></svg>
          <span class="sep2"></span>
        </div>
        <span>Documents</span>
        <div class="xctl">
          <span><svg class="ic" width="12" height="12" viewBox="0 0 12 12" stroke="#111"><path d="M1 6.500h10"/></svg></span>
          <span><svg class="ic" width="12" height="12" viewBox="0 0 12 12" fill="none" stroke="#111"><rect x="1.500" y="1.500" width="9" height="9"/></svg></span>
          <span><svg class="ic" width="12" height="12" viewBox="0 0 12 12" stroke="#111"><path d="M1 1l10 10M11 1L1 11"/></svg></span>
        </div>
      </div>
      <div class="xtabs">
        <div class="xt file">File</div><div class="xt home">Home</div><div class="xt share">Share</div><div class="xt view">View</div>
        <div class="xtr">${chev("up", "#aaa")}${icons.help}</div>
      </div>
      <div class="xrib">
        <div class="grp cb">
          <div class="gbody">
            ${big("w-pin", "pin", html`Pin to Quick<br />access`)}
            ${big("w-copy", "copy", "Copy", true)}
            ${big("w-paste", "paste", "Paste", true)}
            <div class="col col-cb">${sm("cut", "Cut", "dim")}${sm("cpath", "Copy path", "dim")}${sm("pshort", "Paste shortcut", "dim")}</div>
          </div>
          <div class="glab">Clipboard</div>
        </div>
        <div class="grp org">
          <div class="gbody">
            <div class="col col-m">${sm("moveto", "Move to", "dim", "d")}${sm("copyto", "Copy to", "dim", "d")}</div>
            <span class="orgsep"></span>
            <div class="col">${sm("del", "Delete", "soft", "x")}${sm("rename", "Rename", "dim")}</div>
          </div>
          <div class="glab">Organize</div>
        </div>
        <div class="grp nw">
          <div class="gbody">
            ${big("nfold", "nfolder", html`New<br />folder`)}
            <div class="col nsmall">
              <div class="sm">${icons.nitem}<span class="caret"></span></div>
              <div class="sm">${icons.eaccess}<span class="caret"></span></div>
            </div>
          </div>
          <div class="glab">New</div>
        </div>
        <div class="grp op">
          <div class="gbody">
            <div class="big prop-b"><div class="bi">${icons.props}</div><div>Properties</div><span class="caret under"></span></div>
            <div class="col col-op">${sm("open2", "Open", "dim", "d")}${sm("edit", "Edit", "dim")}${sm("history", "History")}</div>
          </div>
          <div class="glab">Open</div>
        </div>
        <div class="grp sl">
          <div class="gbody">
            <div class="col col-sl">${sm("selall", "Select all")}${sm("selnone", "Select none")}${sm("selinv", "Invert selection")}</div>
          </div>
          <div class="glab">Select</div>
        </div>
      </div>
      <div class="addr">
        <div class="anav">
          <span class="b">${icons.back}</span><span class="b b2">${icons.fwd}</span><span class="b b3">${chev("down", "#888")}</span><span class="b b4">${icons.up}</span>
        </div>
        <div class="abar">
          ${icons.doc}<span class="t1">${chev("small", "#666")}</span>This PC<span class="t2">${chev("small", "#666")}</span>Documents<span class="r">${chev("down")}</span>
        </div>
        <div class="arefresh">${icons.refresh}</div>
        <div class="asearch"><span>Search Documents</span>${icons.magnif}</div>
      </div>
      <div class="xmain">
        <div class="nav"><div class="navin">
          ${navRows.map(([t, ic, sub, sel]) => html`<div class="nrow ${sub ? "sub" : "top"} ${sel ? "sel" : ""}"><span class="ni">${icons[ic]}</span>${t}</div>`)}
        </div></div>
        <div class="vs">
          <div class="arrow">${chev("up", "#444")}</div><div class="gap1"></div><div class="thumb"></div><div class="gap2"></div><div class="arrow">${chev("down", "#444")}</div>
        </div>
        <div class="fp">
          <div class="fh"><div>Name</div><div>Date modified</div><div>Type</div><div>Size</div><span class="sortc">${chev("up", "#999")}</span></div>
          <div class="fl">
            ${files.map(([n, ic, d, t, z, sel]) => html`<div class="fr ${sel ? "sel" : ""}">
              <div class="n"><span class="fi">${icons[ic]}</span>${n}</div><div class="d">${d}</div><div class="d2">${t}</div><div class="sz">${z}</div>
            </div>`)}
          </div>
          <div class="hs"><div class="arrow">${chev("left", "#333")}</div><div class="thumb"></div><div class="arrow">${chev("right", "#333")}</div></div>
        </div>
      </div>
      <div class="xstat"><span class="stattext">11 items</span><div class="views"><div class="vbtn">${icons.details}</div>${icons.large}</div></div>
    </section>`;
  }

  render() {
    return html`
      <div class="desk">
        ${this.mail({ cls: "back", initials: "BA", from: "Baker, Adrien", subj: "[User report] Credit card authorization form", file: "phish_alert_iocp_v1.4.48.msg", size: "328 KB", icon: "outlook", code: "479", time: "7:26 PM" })}
        ${this.mail({ cls: "front", initials: "WL", from: "Wehner - Lind", subj: "Credit card authorization form", file: "CC_AUTH_FORMPurduepharma_863962.pdf", size: "233 KB", icon: "pdfbig", code: "479", time: "7:24 PM" })}
        ${this.explorer()}
        <div class="wm">
          <span>ANY</span>
          <svg class="ic" width="58" height="64" viewBox="0 0 60 64" fill="none" stroke="rgba(205,205,205,.5)" stroke-width="2"><path d="M6 4l50 28L6 60z"/><path d="M14 20l26 12-26 14z"/></svg>
          <span class="r2">RUN</span>
        </div>
      </div>
      <div class="task">
        <div class="tstart">${icons.winlogo}</div>
        <div class="tsearch">${icons.tbsearch}<span class="q">Type here to search</span></div>
        <div class="tapp">${icons.taskview}</div>
        <div class="tapp edge">${icons.edge}</div>
        <div class="tapp active">${icons.exptb}</div>
        <div class="tapp">${icons.firefox}</div>
        <div class="tapp run">${icons.outlook}</div>
        <div class="tray">
          <span class="ti">${icons.tbchev}</span><span class="ti">${icons.cam}</span><span class="ti">${icons.net}</span><span class="ti">${icons.vol}</span>
          <div class="clock">10:12 PM<br />5/21/2025</div>
          <div class="notif">${icons.notif}</div>
        </div>
      </div>
    `;
  }
}
